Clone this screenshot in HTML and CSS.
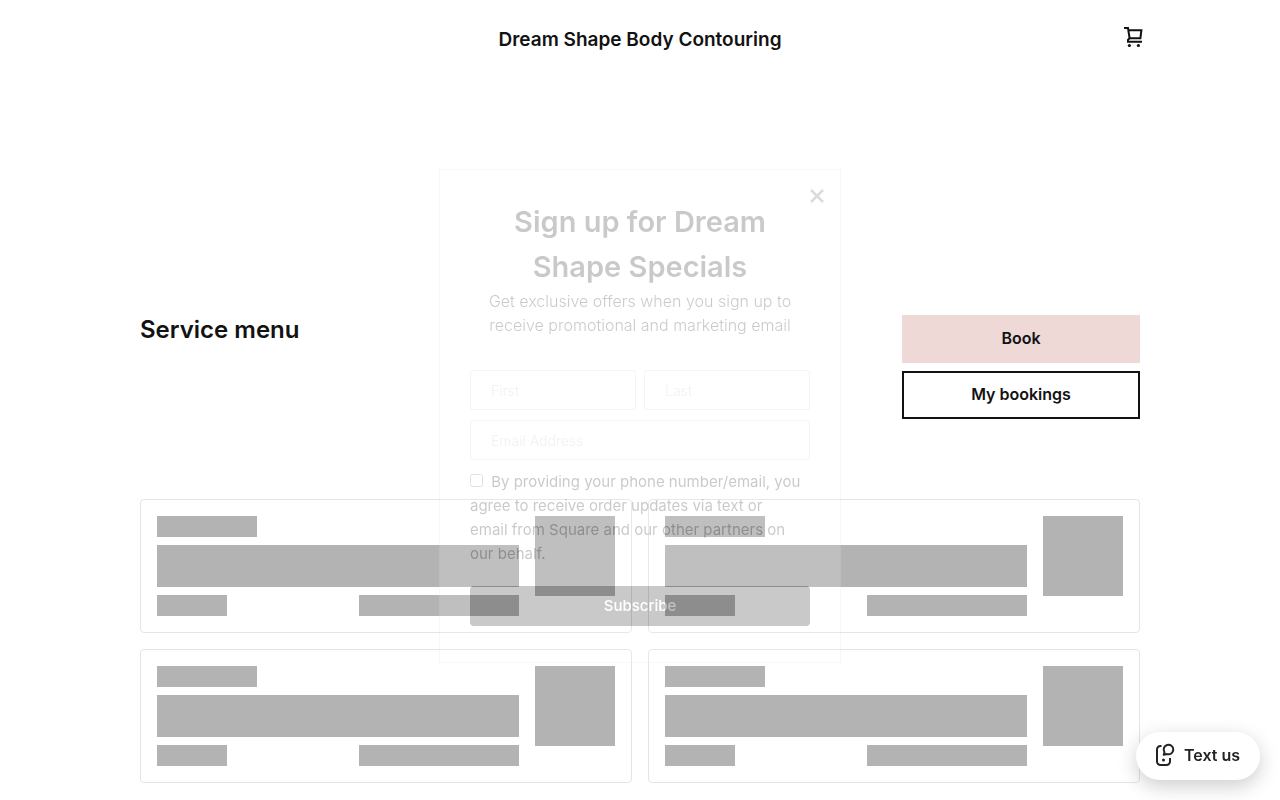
FILE: index.html
```html
<!DOCTYPE html>
<html lang="en">
<head>
  <meta charset="UTF-8">
  <meta name="viewport" content="width=device-width, initial-scale=1.0">
  <title>Dream Shape Body Contouring</title>
  <link rel="stylesheet" href="styles.css">
</head>
<body>

  <header class="site-header">
    <a href="#" class="site-title">Dream Shape Body Contouring</a>
    <a href="#" class="cart-link" aria-label="Cart">
      <svg width="20" height="24" viewBox="0 0 20 24" fill="none" stroke="#121212" stroke-width="2">
        <path d="M0 2h4l1.600 10.200h10.800L17.400 4.200H4.500"/>
        <path d="M5.600 12.200L4 13.800v2h14"/>
        <circle cx="5.400" cy="19.500" r="1.600" fill="#121212" stroke="none"/>
        <circle cx="14.400" cy="19.500" r="1.600" fill="#121212" stroke="none"/>
      </svg>
    </a>
  </header>

  <main class="container">
    <section class="intro">
      <h1>Service menu</h1>
      <div class="actions">
        <button type="button" class="btn btn-book">Book</button>
        <button type="button" class="btn btn-outline">My bookings</button>
      </div>
    </section>

    <!-- Placeholder cards while the services load -->
    <section class="services">
      <div class="card">
        <div class="card-text">
          <div class="bone bone-title"></div>
          <div class="bone bone-body"></div>
          <div class="card-row">
            <div class="bone bone-price"></div>
            <div class="bone bone-time"></div>
          </div>
        </div>
        <div class="bone bone-photo"></div>
      </div>
      <div class="card">
        <div class="card-text">
          <div class="bone bone-title"></div>
          <div class="bone bone-body"></div>
          <div class="card-row">
            <div class="bone bone-price"></div>
            <div class="bone bone-time"></div>
          </div>
        </div>
        <div class="bone bone-photo"></div>
      </div>
      <div class="card">
        <div class="card-text">
          <div class="bone bone-title"></div>
          <div class="bone bone-body"></div>
          <div class="card-row">
            <div class="bone bone-price"></div>
            <div class="bone bone-time"></div>
          </div>
        </div>
        <div class="bone bone-photo"></div>
      </div>
      <div class="card">
        <div class="card-text">
          <div class="bone bone-title"></div>
          <div class="bone bone-body"></div>
          <div class="card-row">
            <div class="bone bone-price"></div>
            <div class="bone bone-time"></div>
          </div>
        </div>
        <div class="bone bone-photo"></div>
      </div>
    </section>
  </main>

  <div class="overlay">
    <form class="signup">
      <button type="button" class="signup-close" aria-label="Close">
        <svg width="14" height="14" viewBox="0 0 14 14" stroke="#555" stroke-width="2.500">
          <path d="M1 1l12 12M13 1L1 13"/>
        </svg>
      </button>
      <h2>Sign up for Dream<br>Shape Specials</h2>
      <p class="signup-text">Get exclusive offers when you sign up to<br>receive promotional and marketing email</p>
      <div class="fields">
        <input type="text" placeholder="First" aria-label="First">
        <input type="text" placeholder="Last" aria-label="Last">
        <input type="email" class="wide" placeholder="Email Address" aria-label="Email Address">
      </div>
      <div class="consent">
        <input type="checkbox" id="consent">
        <label for="consent">By providing your phone number/email, you<br>agree to receive order updates via text or<br>email from Square and our other partners on<br>our behalf.</label>
      </div>
      <button type="submit" class="subscribe">Subscribe</button>
    </form>
  </div>

  <button type="button" class="text-us">
    <svg width="20" height="24" viewBox="0 0 20 24" fill="none" stroke="#232323" stroke-width="2">
      <path d="M6.500 3H5.500A3.500 3.500 0 0 0 2 6.500v12A3.500 3.500 0 0 0 5.500 22h6a3.500 3.500 0 0 0 3.500-3.500V15"/>
      <path d="M9.500 9.200A4.800 4.800 0 1 1 12 11.100L8.700 11.700z" stroke-linejoin="round"/>
      <circle cx="8.500" cy="17" r="1.500" fill="#232323" stroke="none"/>
    </svg>
    Text us
  </button>

</body>
</html>
```

FILE: styles.css
```css
/* General Styles */
* {
  box-sizing: border-box;
}

body {
  margin: 0;
  font-family: Inter, sans-serif;
  background-color: #fff;
  color: #121212;
}

h1, h2, p {
  margin: 0;
}

button,
input {
  font-family: inherit;
}

button {
  cursor: pointer;
}

svg {
  display: block;
}

.container,
.site-header {
  width: 100%;
  max-width: 1040px;
  margin: 0 auto;
  padding: 0 20px;
}

/* Header */
.site-header {
  display: grid;
  grid-template-columns: 1fr auto 1fr;
  align-items: center;
  height: 76px;
}

.site-title {
  grid-column: 2;
  padding-top: 2px;
  font-size: 19px;
  font-weight: 600;
  color: #121212;
  text-decoration: none;
}

.cart-link {
  justify-self: end;
  margin-right: -4px;
}

/* Intro */
.intro {
  display: flex;
  justify-content: space-between;
  align-items: flex-start;
  padding: 239px 0 80px;
}

.intro h1 {
  font-size: 24px;
  font-weight: 600;
  line-height: 30px;
}

.actions {
  display: flex;
  flex-direction: column;
  gap: 8px;
  width: 238px;
}

.btn {
  height: 48px;
  padding-bottom: 3px;
  font-size: 16px;
  font-weight: 600;
  color: #121212;
  border: none;
}

.btn-book {
  background-color: #eed9d7;
}

.btn-outline {
  background-color: #fff;
  border: 2px solid #121212;
}

/* Service cards */
.services {
  display: grid;
  grid-template-columns: 1fr 1fr;
  gap: 16px;
}

.card {
  display: flex;
  gap: 16px;
  padding: 16px;
  border: 1px solid #e4e4e4;
  border-radius: 4px;
}

.card-text {
  flex: 1;
  display: flex;
  flex-direction: column;
  gap: 8px;
}

.card-row {
  display: flex;
  justify-content: space-between;
}

.bone {
  height: 21px;
  background-color: #b3b3b3;
}

.bone-title {
  width: 100px;
}

.bone-body {
  height: 42px;
}

.bone-price {
  width: 70px;
}

.bone-time {
  width: 160px;
}

.bone-photo {
  width: 80px;
  height: 80px;
}

/* Signup popup, part way through its fade */
.overlay {
  position: fixed;
  inset: 0;
  display: flex;
  align-items: center;
  justify-content: center;
  padding-top: 32px;
  opacity: 0.21;
}

.signup {
  position: relative;
  width: 402px;
  padding: 29px 30px 36px;
  background-color: rgba(255, 255, 255, 0.8);
  border: 1px solid #ddd;
  color: #000;
}

.signup-close {
  position: absolute;
  top: 19px;
  right: 16px;
  padding: 0;
  background: none;
  border: none;
}

.signup h2 {
  font-size: 29px;
  font-weight: 600;
  line-height: 45px;
  text-align: center;
}

.signup-text {
  margin-bottom: 33px;
  font-size: 16px;
  font-weight: 300;
  line-height: 24px;
  text-align: center;
  white-space: nowrap;
}

.fields {
  display: grid;
  grid-template-columns: 1fr 1fr;
  gap: 10px 8px;
  margin-bottom: 10px;
}

.fields input {
  min-width: 0;
  height: 40px;
  padding: 0 20px;
  font-size: 14px;
  font-weight: 300;
  background-color: transparent;
  border: 1px solid #ccc;
  border-radius: 2px;
}

.fields input::placeholder {
  color: #bbb;
}

.fields .wide {
  grid-column: 1 / 3;
}

.consent {
  margin-bottom: 20px;
  font-size: 15px;
  line-height: 24px;
  white-space: nowrap;
}

.consent input {
  width: 13px;
  height: 13px;
  margin: 0 4px 0 0;
}

.subscribe {
  width: 100%;
  height: 40px;
  padding-bottom: 2px;
  font-size: 15px;
  font-weight: 500;
  color: #fff;
  background-color: #000;
  border: none;
  border-radius: 4px;
}

/* Text us button */
.text-us {
  position: fixed;
  right: 20px;
  bottom: 20px;
  display: flex;
  align-items: center;
  gap: 9px;
  height: 48px;
  padding: 0 20px 2px 19px;
  font-size: 16px;
  font-weight: 600;
  color: #232323;
  background-color: #fff;
  border: none;
  border-radius: 24px;
  box-shadow: 0 6px 20px rgba(0, 0, 0, 0.2);
}

/* Responsive Styles */
@media (max-width: 768px) {
  .intro {
    flex-direction: column;
    gap: 24px;
    padding: 80px 0 40px;
  }

  .actions {
    width: 100%;
  }

  .services {
    grid-template-columns: 1fr;
  }
}
```
